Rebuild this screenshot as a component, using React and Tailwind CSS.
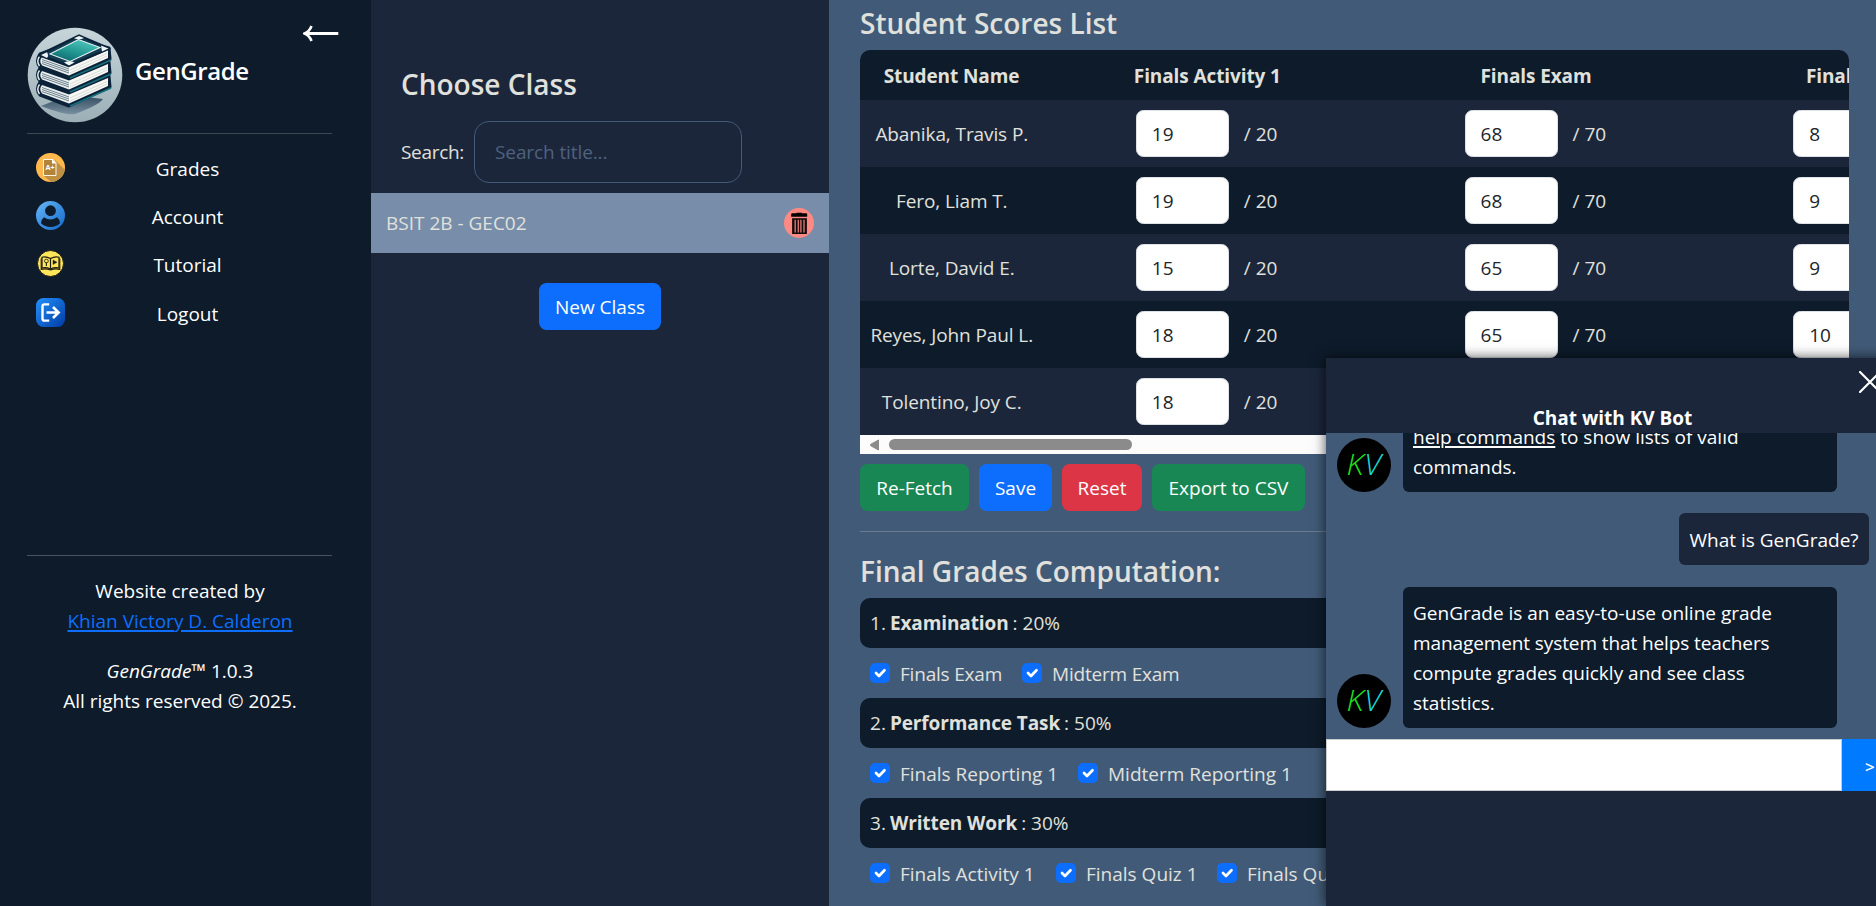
const students = [
  ["Abanika, Travis P.", 19, 68, 8],
  ["Fero, Liam T.", 19, 68, 9],
  ["Lorte, David E.", 15, 65, 9],
  ["Reyes, John Paul L.", 18, 65, 10],
  ["Tolentino, Joy C.", 18, 66, 9],
];

function Book({ dy }) {
  return (
    <g transform={`translate(0 ${dy})`} strokeLinejoin="round">
      <path d="M13 27 L52 13 L82 21 L83 32 L42 51 L13 40 Q8 34 13 27Z" fill="#0b2239" stroke="#0b2239" strokeWidth="3" />
      <path d="M15 30 L42 39.5 V48.5 L15 38.5 Q11.5 34 15 30Z" fill="#e9efef" />
      <path d="M42 39.5 L81 23 V31 L42 48.5Z" fill="#f7f7f3" />
      <path d="M15 32.5 L42 42 M15 34.5 L42 44 M15 36.5 L42 46" stroke="#5d7381" strokeWidth=".9" />
      <path d="M43 43 L80 26.5 M43 46 L80 29" stroke="#b9c1c1" strokeWidth=".5" />
      <path d="M12.5 29.5 Q9 34 12.5 39" stroke="#e9efef" strokeWidth="1.4" fill="none" />
      <path d="M43 51 L84 33" stroke="#17707c" strokeWidth="1.6" />
    </g>
  );
}

function Logo() {
  return (
    <svg viewBox="0 0 96 96" className="size-24 shrink-0">
      <defs>
        <linearGradient id="disc" x1="0" y1="0" x2="0" y2="1">
          <stop offset="0" stopColor="#c6d5da" />
          <stop offset="1" stopColor="#9cafb6" />
        </linearGradient>
        <linearGradient id="cover" x1="0" y1="1" x2=".6" y2="0">
          <stop offset="0" stopColor="#0b5a66" />
          <stop offset=".5" stopColor="#1f9490" />
          <stop offset="1" stopColor="#4cc3b9" />
        </linearGradient>
        <linearGradient id="shade" x1="0" y1="0" x2="0" y2="1">
          <stop offset="0" stopColor="#2f485c" />
          <stop offset="1" stopColor="#7890a0" />
        </linearGradient>
      </defs>
      <circle cx="48" cy="48" r="47.3" fill="url(#disc)" />
      <path d="M14 79 L42 68 L76 72 Q72 78 48 87 Q40 89 14 79Z" fill="url(#shade)" />
      <Book dy={28} />
      <Book dy={14} />
      <Book dy={0} />
      <path d="M12 28 L52 8.5 L82.5 21.5 L42 39Z" fill="#123a50" stroke="#0b2239" strokeWidth="2.4" strokeLinejoin="round" />
      <path d="M23 27 L51.5 12.5 L73 20.5 L43 34.5Z" fill="url(#cover)" stroke="#e6f2f0" strokeWidth="1.1" />
      <path d="M47 11.2 L52 8.9 L57 11 Q52 13.5 47 11.2Z M14 28 L20 25.2 Q22 29 20 31Z M74 18.5 L81.5 21.6 L75 24.4Z M37 35.5 Q43 33 47.5 35.5 L42 38.4Z" fill="#eef5f5" />
    </svg>
  );
}

function GradesIcon() {
  return (
    <svg viewBox="0 0 29 29" className="size-[29px]">
      <defs><clipPath id="gclip"><circle cx="14.5" cy="14.5" r="14.5" /></clipPath></defs>
      <g clipPath="url(#gclip)">
        <rect width="29" height="29" fill="#ffb84d" />
        <path d="M19 7 L30 18 V30 H16 L7.5 22.5Z" fill="#bd9044" />
        <path d="M7.5 6.5 H17 L20 9.8 V22.5 H7.5Z" fill="#b3853a" stroke="#fff5e0" strokeWidth="1" />
        <path d="M16 6 L20.5 10.5 H16Z" fill="#fff" />
      </g>
      <text x="9.6" y="17.2" fontSize="7.2" fontWeight="700" fill="#fff" fontFamily="Open Sans, sans-serif" textLength="9">A+</text>
    </svg>
  );
}

function AccountIcon() {
  return (
    <svg viewBox="0 0 29 29" className="size-[29px]">
      <defs><linearGradient id="acc" x1="0" y1="0" x2="1" y2="1"><stop stopColor="#68b7f8" /><stop offset="1" stopColor="#1268c8" /></linearGradient></defs>
      <circle cx="14.5" cy="14.5" r="14.5" fill="url(#acc)" />
      <circle cx="14.5" cy="9.7" r="5.4" fill="#0d1b2a" />
      <path d="M8 16.2 Q14.5 20.6 21 16.2 Q24 18.5 24 22.2 Q20 26 14.5 26 Q9 26 5 22.2 Q5 18.5 8 16.2Z" fill="#0d1b2a" />
    </svg>
  );
}

function TutorialIcon() {
  return (
    <svg viewBox="0 0 29 29" className="size-[29px]" fill="none" stroke="#1d1c10">
      <circle cx="14.5" cy="14.5" r="13" fill="#ffe65a" strokeWidth="1" />
      <path d="M14.5 9.5 Q10 7 6 8.2 V19 Q10 17.8 14.5 20 Q19 17.8 23 19 V8.2 Q19 7 14.5 9.5 V20" strokeWidth="1.2" />
      <path d="M5.2 9.5 V20.4 Q10 19.2 14.5 21 Q19 19.2 23.8 20.4 V9.5" strokeWidth="1.1" />
      <circle cx="10.4" cy="12" r="1.9" strokeWidth=".8" />
      <path d="M10.4 13.5 V17" strokeWidth="1.1" />
      <path d="M17 11 L21 13.2 L17 15.5Z" fill="#1d1c10" strokeWidth=".4" />
    </svg>
  );
}

function LogoutIcon() {
  return (
    <svg viewBox="0 0 29 29" className="size-[29px]" fill="none">
      <defs><linearGradient id="lgo" x1="0" y1="0" x2="1" y2="1"><stop stopColor="#2491fb" /><stop offset="1" stopColor="#003ba6" /></linearGradient></defs>
      <rect width="29" height="29" rx="7.5" fill="url(#lgo)" />
      <path d="M13.2 6.4 H8.4 Q6.5 6.4 6.5 8.3 V20.7 Q6.5 22.6 8.4 22.6 H13.2" stroke="#fff" strokeWidth="2.4" />
      <path d="M10.5 14.5 H22 M17 9 L22.6 14.5 L17 20" stroke="#fff" strokeWidth="2.6" />
    </svg>
  );
}

function TrashIcon() {
  return (
    <svg viewBox="0 0 30 30" className="size-[30px] shrink-0">
      <circle cx="15" cy="15" r="15" fill="#ff8a84" />
      <path d="M7.2 5.9 Q7.2 5.3 8.4 5.3 H12.5 V4.8 H17.8 V5.3 H22 Q23.2 5.3 23.2 5.9 V8.8 H7.2Z" fill="#000" />
      <path d="M8.1 10.2 H22.9 V26 H8.1Z" fill="#140a0a" />
      <path d="M11.2 11.7 V24.5 M14.3 11.7 V24.5 M16.9 11.7 V24.5 M20 11.7 V24.5" stroke="#d8736e" strokeWidth="1.4" />
    </svg>
  );
}

function MenuItem({ icon, children }) {
  return (
    <div className="flex h-[48.4px] items-center">
      <div className="ml-9 w-[29px]">{icon}</div>
      <div className="ml-[22px] mt-[3px] w-[201px] text-center">{children}</div>
    </div>
  );
}

function Score({ value, max }) {
  return (
    <div className="flex w-[328.7px] shrink-0 items-center justify-center">
      <div className="flex h-[47px] w-[93px] items-center rounded-[7.5px] border border-[#dee2e6] bg-white pl-[15px] pt-px text-[#212529]">{value}</div>
      <span className="ml-[15px] mt-px w-[36px] whitespace-nowrap">/ {max}</span>
    </div>
  );
}

function Check({ className, children }) {
  return (
    <label className={`flex shrink-0 items-center ${className}`}>
      <svg viewBox="0 0 20 20" className="mr-[10px] size-5 shrink-0">
        <rect width="20" height="20" rx="5" fill="#0d6efd" />
        <path d="M6 10 L9 13 L14.5 7.3" fill="none" stroke="#fff" strokeWidth="2.7" strokeLinecap="round" strokeLinejoin="round" />
      </svg>
      <span className="mt-px whitespace-nowrap">{children}</span>
    </label>
  );
}

function Criterion({ n, name, pct }) {
  return (
    <div className="flex h-[50px] items-center gap-1 rounded-[10px] bg-[#0d1b2a] px-2.5">
      <span>{n}.</span>
      <span className="font-bold tracking-[-0.1px]">{name}</span>
      <span>: {pct}%</span>
    </div>
  );
}

function Avatar() {
  return (
    <svg viewBox="0 0 54 54" className="ml-[11px] mr-3 size-[54px] shrink-0" fontFamily="Open Sans, sans-serif" fontSize="29" fontStyle="italic" fontWeight="300">
      <circle cx="27" cy="27" r="27" fill="#000" />
      <text x="9.5" y="37" fill="#1fe01f" textLength="17" lengthAdjust="spacingAndGlyphs">K</text>
      <text x="27" y="37" fill="#17dcd6" textLength="17" lengthAdjust="spacingAndGlyphs">V</text>
    </svg>
  );
}

export default function App() {
  return (
    <div className="relative flex h-[906px] w-[1876px] overflow-hidden bg-[#0d1b2a] font-['Open_Sans','Noto_Sans',sans-serif] text-[19px] leading-[30px] text-[#e0e1dd]">
      <aside className="flex w-[371px] shrink-0 flex-col bg-[#0d1b2a] text-white">
        <div className="flex h-[133px] items-start pl-[27px] pt-[27px]">
          <Logo />
          <h1 className="ml-3 mt-[26px] text-[24px] font-semibold leading-[36px] tracking-[-0.4px]">GenGrade</h1>
          <svg viewBox="0 0 36 18" className="-mt-[2px] ml-[54px] h-[18px] w-9" fill="none" stroke="#fff">
            <path d="M3 8.5 H35.3" strokeWidth="3" />
            <path d="M8.5 1 Q6.5 6.5 1.5 8.5 Q6.5 10.5 8.5 16" strokeWidth="2.6" />
          </svg>
        </div>
        <div className="ml-[27px] h-px w-[305px] bg-[#3d4855]" />
        <nav className="pt-[9px]">
          <MenuItem icon={<GradesIcon />}>Grades</MenuItem>
          <MenuItem icon={<AccountIcon />}>Account</MenuItem>
          <MenuItem icon={<TutorialIcon />}>Tutorial</MenuItem>
          <MenuItem icon={<LogoutIcon />}>Logout</MenuItem>
        </nav>
        <div className="ml-[27px] mt-[218px] h-px w-[305px] bg-[#495360]" />
        <div className="mt-5 w-[360px] text-center">
          <p>Website created by</p>
          <p><a className="text-[#0d6efd] underline decoration-2 underline-offset-2">Khian Victory D. Calderon</a></p>
          <p className="mt-5"><i>GenGrade</i>™ 1.0.3</p>
          <p>All rights reserved © 2025.</p>
        </div>
      </aside>

      <section className="flex w-[458px] shrink-0 flex-col bg-[#1b263b]">
        <h2 className="ml-[30px] mt-[66px] h-[55px] text-[28px] font-semibold leading-[36px]">Choose Class</h2>
        <div className="flex h-[62px] items-center pl-[30px]">
          <span className="w-[73px] tracking-[-0.3px]">Search:</span>
          <div className="flex h-[62px] w-[268px] items-center rounded-[15px] border border-[#415a77] pl-5 tracking-[-0.1px] text-[#4f617e]">Search title...</div>
        </div>
        <div className="mt-2.5 flex h-[60px] items-center justify-between bg-[#778da9] pl-[15px] pr-[15px]">
          <span>BSIT 2B - GEC02</span>
          <TrashIcon />
        </div>
        <button className="mt-[30px] h-[47px] w-[122px] self-center rounded-[7.5px] bg-[#0d6efd] pt-px text-white">New Class</button>
      </section>

      <main className="flex min-w-0 grow flex-col bg-[#415a77] pl-[31px] pr-[27px]">
        <h2 className="h-[50px] pt-[5px] text-[28px] font-semibold leading-[36px]">Student Scores List</h2>
        <div className="h-[404px] shrink-0 overflow-hidden rounded-t-[10px]">
          <div className="flex h-[50px] items-center bg-[#0d1b2a] pt-px text-center font-bold tracking-[-0.1px]">
            <div className="w-[183px] shrink-0">Student Name</div>
            <div className="w-[328.7px] shrink-0">Finals Activity 1</div>
            <div className="w-[328.7px] shrink-0">Finals Exam</div>
            <div className="w-[328.7px] shrink-0">Finals Quiz 1</div>
          </div>
          {students.map(([name, activity, exam, quiz]) => (
            <div key={name} className="flex h-[67px] items-center odd:bg-[#0d1b2a] even:bg-[#1b263b]">
              <div className="w-[183.5px] shrink-0 whitespace-nowrap text-center tracking-[-0.1px]">{name}</div>
              <Score value={activity} max={20} />
              <Score value={exam} max={70} />
              <Score value={quiz} max={10} />
            </div>
          ))}
          <div className="flex h-[19px] items-center bg-[#fcfcfc] pl-2.5">
            <svg viewBox="0 0 9 12" className="h-3 w-[9px]"><path d="M8.5 1 V11 L.8 6.8 Q0 6 .8 5.2Z" fill="#8b8b8b" stroke="#8b8b8b" strokeLinejoin="round" /></svg>
            <div className="ml-2.5 h-[11px] w-[243px] rounded-full bg-[#8b8b8b]" />
          </div>
        </div>
        <div className="mt-2.5 flex shrink-0 gap-2.5 text-white">
          <button className="h-[47px] w-[109px] rounded-[7.5px] bg-[#198754] pt-px">Re-Fetch</button>
          <button className="h-[47px] w-[73px] rounded-[7.5px] bg-[#0d6efd] pt-px">Save</button>
          <button className="h-[47px] w-[80px] rounded-[7.5px] bg-[#dc3545] pt-px">Reset</button>
          <button className="h-[47px] w-[153px] rounded-[7.5px] bg-[#198754] pt-px">Export to CSV</button>
        </div>
        <div className="mt-5 h-px shrink-0 bg-[#697c91]" />
        <h2 className="mt-[21px] h-[45px] shrink-0 text-[28px] font-semibold leading-[36px]">Final Grades Computation:</h2>
        <Criterion n={1} name="Examination" pct={20} />
        <div className="flex h-[50px] items-center pl-2.5">
          <Check className="w-[152px] tracking-[-0.2px]">Finals Exam</Check>
          <Check className="tracking-[-0.2px]">Midterm Exam</Check>
        </div>
        <Criterion n={2} name="Performance Task" pct={50} />
        <div className="flex h-[50px] items-center pl-2.5">
          <Check className="w-[208px]">Finals Reporting 1</Check>
          <Check>Midterm Reporting 1</Check>
        </div>
        <Criterion n={3} name="Written Work" pct={30} />
        <div className="flex h-[50px] items-center pl-2.5">
          <Check className="w-[186px]">Finals Activity 1</Check>
          <Check className="w-[161px]">Finals Quiz 1</Check>
          <Check>Finals Quiz 2</Check>
        </div>
      </main>

      <div className="absolute left-[1326px] top-[358px] flex h-[548px] w-[573px] flex-col bg-[#1b263b] text-white shadow-[0_0_12px_rgba(0,0,0,0.7)]">
        <header className="flex h-[75px] shrink-0 flex-col">
          <div className="flex h-[46px] justify-end pr-[18px] pt-[13px]">
            <svg viewBox="0 0 22 22" className="size-[22px]"><path d="M1 1 L21 21 M21 1 L1 21" stroke="#fff" strokeWidth="2.2" strokeLinecap="round" /></svg>
          </div>
          <div className="text-center font-bold">Chat with KV Bot</div>
        </header>
        <div className="flex h-[306px] shrink-0 flex-col justify-end overflow-hidden bg-[#415a77] pb-[11px]">
          <div className="flex shrink-0 items-end">
            <Avatar />
            <div className="w-[434px] rounded-md bg-[#0d1b2a] px-2.5 pb-2.5 pt-3">
              Type <u className="decoration-2 underline-offset-2">help</u> or<br />
              <u className="decoration-2 underline-offset-2">help commands</u> to show lists of valid<br />
              commands.
            </div>
          </div>
          <div className="mr-[30px] mt-[21px] flex h-[52px] w-[190px] shrink-0 items-center justify-center self-end rounded-md bg-[#1b263b] pt-px">What is GenGrade?</div>
          <div className="mt-[22px] flex shrink-0 items-end">
            <Avatar />
            <div className="h-[141px] w-[434px] rounded-md bg-[#0d1b2a] px-2.5 pt-[11px]">
              GenGrade is an easy-to-use online grade<br />
              <span className="tracking-[-0.1px]">management system that helps teachers</span><br />
              compute grades quickly and see class<br />
              statistics.
            </div>
          </div>
        </div>
        <div className="flex h-[52px] shrink-0">
          <div className="w-[516px] border border-[#ccc] bg-white" />
          <div className="flex grow items-center bg-[#007bff] pl-[23px] pt-[3px] text-[17px] font-semibold">&gt;</div>
        </div>
      </div>
    </div>
  );
}
